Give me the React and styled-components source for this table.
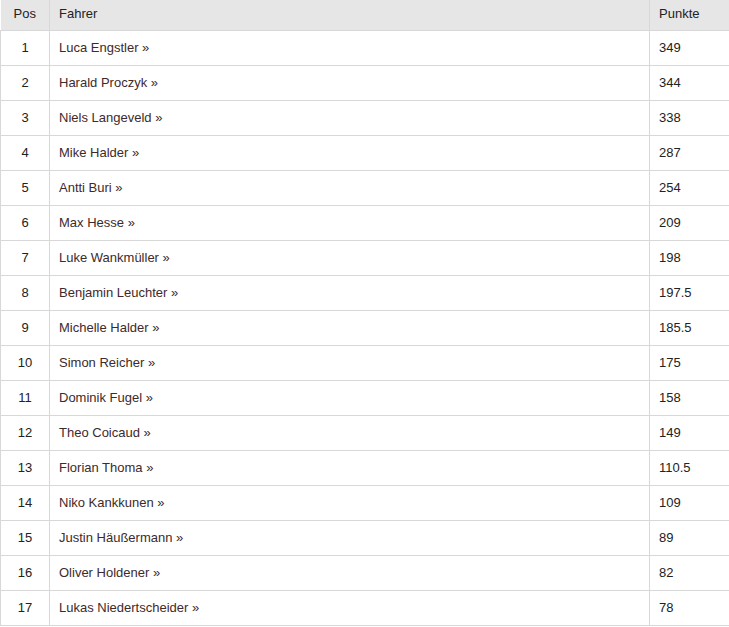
import React from "react";
import styled, { createGlobalStyle } from "styled-components";

const GlobalStyle = createGlobalStyle`
  body {
    margin: 0;
    background: #fff;
    font-family: "Liberation Sans", Arial, sans-serif;
  }
`;

const rows = [
  [1, "Luca Engstler", "349"],
  [2, "Harald Proczyk", "344"],
  [3, "Niels Langeveld", "338"],
  [4, "Mike Halder", "287"],
  [5, "Antti Buri", "254"],
  [6, "Max Hesse", "209"],
  [7, "Luke Wankmüller", "198"],
  [8, "Benjamin Leuchter", "197.5"],
  [9, "Michelle Halder", "185.5"],
  [10, "Simon Reicher", "175"],
  [11, "Dominik Fugel", "158"],
  [12, "Theo Coicaud", "149"],
  [13, "Florian Thoma", "110.5"],
  [14, "Niko Kankkunen", "109"],
  [15, "Justin Häußermann", "89"],
  [16, "Oliver Holdener", "82"],
  [17, "Lukas Niedertscheider", "78"],
];

const Table = styled.table`
  width: 729px;
  border-collapse: collapse;
  table-layout: fixed;
  font-size: 13px;
  color: #222;
`;

const HeadCell = styled.th`
  height: 30px;
  padding: ${(p) => (p.$center ? "0 10px 3px" : "0 10px 3px 9px")};
  box-sizing: border-box;
  background: #e6e6e6;
  font-weight: normal;
  text-align: ${(p) => (p.$center ? "center" : "left")};
  border-left: 1px solid #d8d8d8;
  border-right: 1px solid #d8d8d8;
  border-bottom: 1px solid #d8d8d8;
  &:first-child {
    border-left: none;
  }
`;

const Cell = styled.td`
  height: 35px;
  padding: ${(p) => (p.$center ? "0 10px" : "0 10px 0 9px")};
  box-sizing: border-box;
  text-align: ${(p) => (p.$center ? "center" : "left")};
  border: 1px solid #d8d8d8;
  border-top: none;
`;

const DriverLink = styled.a`
  color: #3e2a2a;
  text-decoration: none;
`;

export default function App() {
  return (
    <>
      <GlobalStyle />
      <Table>
        <colgroup>
          <col style={{ width: 49 }} />
          <col style={{ width: 600 }} />
          <col style={{ width: 80 }} />
        </colgroup>
        <thead>
          <tr>
            <HeadCell $center>Pos</HeadCell>
            <HeadCell>Fahrer</HeadCell>
            <HeadCell>Punkte</HeadCell>
          </tr>
        </thead>
        <tbody>
          {rows.map(([pos, name, pts]) => (
            <tr key={pos}>
              <Cell $center>{pos}</Cell>
              <Cell>
                <DriverLink href="#">{name} »</DriverLink>
              </Cell>
              <Cell>{pts}</Cell>
            </tr>
          ))}
        </tbody>
      </Table>
    </>
  );
}
